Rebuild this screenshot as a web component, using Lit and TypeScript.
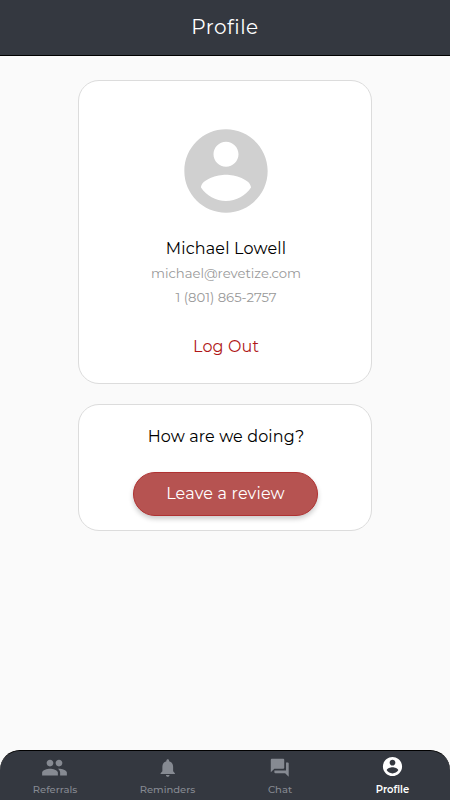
import { LitElement, html, css } from "lit";
import { customElement } from "lit/decorators.js";

const ACCOUNT =
  "M12 2C6.48 2 2 6.48 2 12s4.48 10 10 10 10-4.48 10-10S17.52 2 12 2zm0 3c1.66 0 3 1.34 3 3s-1.34 3-3 3-3-1.34-3-3 1.34-3 3-3zm0 14.2c-2.5 0-4.71-1.28-6-3.22.03-1.99 4-3.08 6-3.08 1.99 0 5.97 1.09 6 3.08-1.29 1.94-3.5 3.22-6 3.22z";

const TABS = [
  {
    id: "referrals",
    label: "Referrals",
    path: "M16 11c1.66 0 2.99-1.34 2.99-3S17.66 5 16 5c-1.66 0-3 1.34-3 3s1.34 3 3 3zm-8 0c1.66 0 2.99-1.34 2.99-3S9.66 5 8 5C6.34 5 5 6.34 5 8s1.34 3 3 3zm0 2c-2.33 0-7 1.17-7 3.5V19h14v-2.5c0-2.33-4.67-3.5-7-3.5zm8 0c-.29 0-.62.02-.97.05 1.16.84 1.97 1.97 1.97 3.45V19h6v-2.5c0-2.33-4.67-3.5-7-3.5z",
  },
  {
    id: "reminders",
    label: "Reminders",
    path: "M12 22c1.1 0 2-.9 2-2h-4c0 1.1.89 2 2 2zm6-6v-5c0-3.07-1.64-5.64-4.5-6.32V4c0-.83-.67-1.5-1.5-1.5s-1.5.67-1.5 1.5v.68C7.63 5.36 6 7.92 6 11v5l-2 2v1h16v-1l-2-2z",
  },
  {
    id: "chat",
    label: "Chat",
    path: "M21 6h-2v9H6v2c0 .55.45 1 1 1h11l4 4V7c0-.55-.45-1-1-1zm-4 6V3c0-.55-.45-1-1-1H3c-.55 0-1 .45-1 1v14l4-4h10c.55 0 1-.45 1-1z",
  },
  { id: "profile", label: "Profile", path: ACCOUNT },
];

@customElement("app-root")
export class AppRoot extends LitElement {
  static styles = css`
    :host {
      display: flex;
      flex-direction: column;
      height: 100vh;
      background: #fafafa;
      font-family: Montserrat, Inter, sans-serif;
      color: #000;
    }
    * { box-sizing: border-box; }
    svg { display: block; fill: currentColor; }
    header {
      height: 56px;
      flex: none;
      display: flex;
      align-items: center;
      justify-content: center;
      padding-bottom: 2px;
      background: #343840;
      border-bottom: 1px solid #000;
      color: #fff;
    }
    h1 {
      margin: 0;
      font-size: 20px;
      line-height: 24px;
      font-weight: 400;
      letter-spacing: 0.5px;
    }
    main {
      flex: 1;
      display: flex;
      flex-direction: column;
      align-items: center;
      gap: 20px;
      padding-top: 24px;
    }
    .card {
      width: 294px;
      display: flex;
      flex-direction: column;
      align-items: center;
      background: #fff;
      border: 1px solid #dcdcdc;
      border-radius: 21px;
      white-space: nowrap;
    }
    .account { height: 304px; padding: 40px 0 0 2px; }
    .review { height: 127px; padding: 20px 0 0 2px; }
    .avatar { width: 100px; height: 100px; color: #d0d0d0; }
    .name {
      margin-top: 16px;
      font-size: 16px;
      line-height: 24px;
      letter-spacing: 0.18px;
    }
    .detail {
      font-size: 13.2px;
      line-height: 24px;
      color: #999;
    }
    .logout {
      margin-top: 26px;
      font-size: 16px;
      line-height: 24px;
      letter-spacing: 0.12px;
      color: #b01818;
    }
    .question {
      font-size: 16px;
      line-height: 24px;
      letter-spacing: 0.12px;
    }
    button {
      width: 185px;
      height: 44px;
      margin: 23px 1px 0 0;
      padding: 0;
      border: 1px solid #b03232;
      border-radius: 22px;
      background: #b65351;
      color: #fff;
      font: 400 16px/24px Montserrat, Inter, sans-serif;
      letter-spacing: 0.18px;
      box-shadow: 0 3px 5px rgba(0, 0, 0, 0.2);
    }
    nav {
      height: 50px;
      flex: none;
      display: grid;
      grid-template-columns: 110px 115px 110px 115px;
      background: #343840;
      border-top: 1px solid #000;
      border-radius: 20px 20px 0 0;
    }
    .tab {
      display: flex;
      flex-direction: column;
      align-items: center;
      padding-top: 3px;
      color: #868a92;
      font-size: 10px;
      line-height: 14px;
      font-weight: 500;
    }
    .icon {
      height: 27px;
      margin-bottom: 2px;
      display: flex;
      align-items: center;
    }
    .icon svg { width: 21.5px; height: 21.5px; }
    .referrals .icon { padding-right: 2px; }
    .referrals svg { width: 27px; height: 27px; }
    .profile .icon { padding-bottom: 2px; }
    .profile svg { width: 23px; height: 23px; }
    .active { color: #fff; font-weight: 600; }
  `;

  render() {
    return html`
      <header><h1>Profile</h1></header>
      <main>
        <section class="card account">
          <svg class="avatar" viewBox="0 0 24 24"><path d=${ACCOUNT}></path></svg>
          <div class="name">Michael Lowell</div>
          <div class="detail">michael@revetize.com</div>
          <div class="detail">1 (801) 865-2757</div>
          <div class="logout">Log Out</div>
        </section>
        <section class="card review">
          <div class="question">How are we doing?</div>
          <button>Leave a review</button>
        </section>
      </main>
      <nav>
        ${TABS.map(
          (t) => html`<div class="tab ${t.id} ${t.id === "profile" ? "active" : ""}">
            <div class="icon"><svg viewBox="0 0 24 24"><path d=${t.path}></path></svg></div>
            <span>${t.label}</span>
          </div>`
        )}
      </nav>
    `;
  }
}
